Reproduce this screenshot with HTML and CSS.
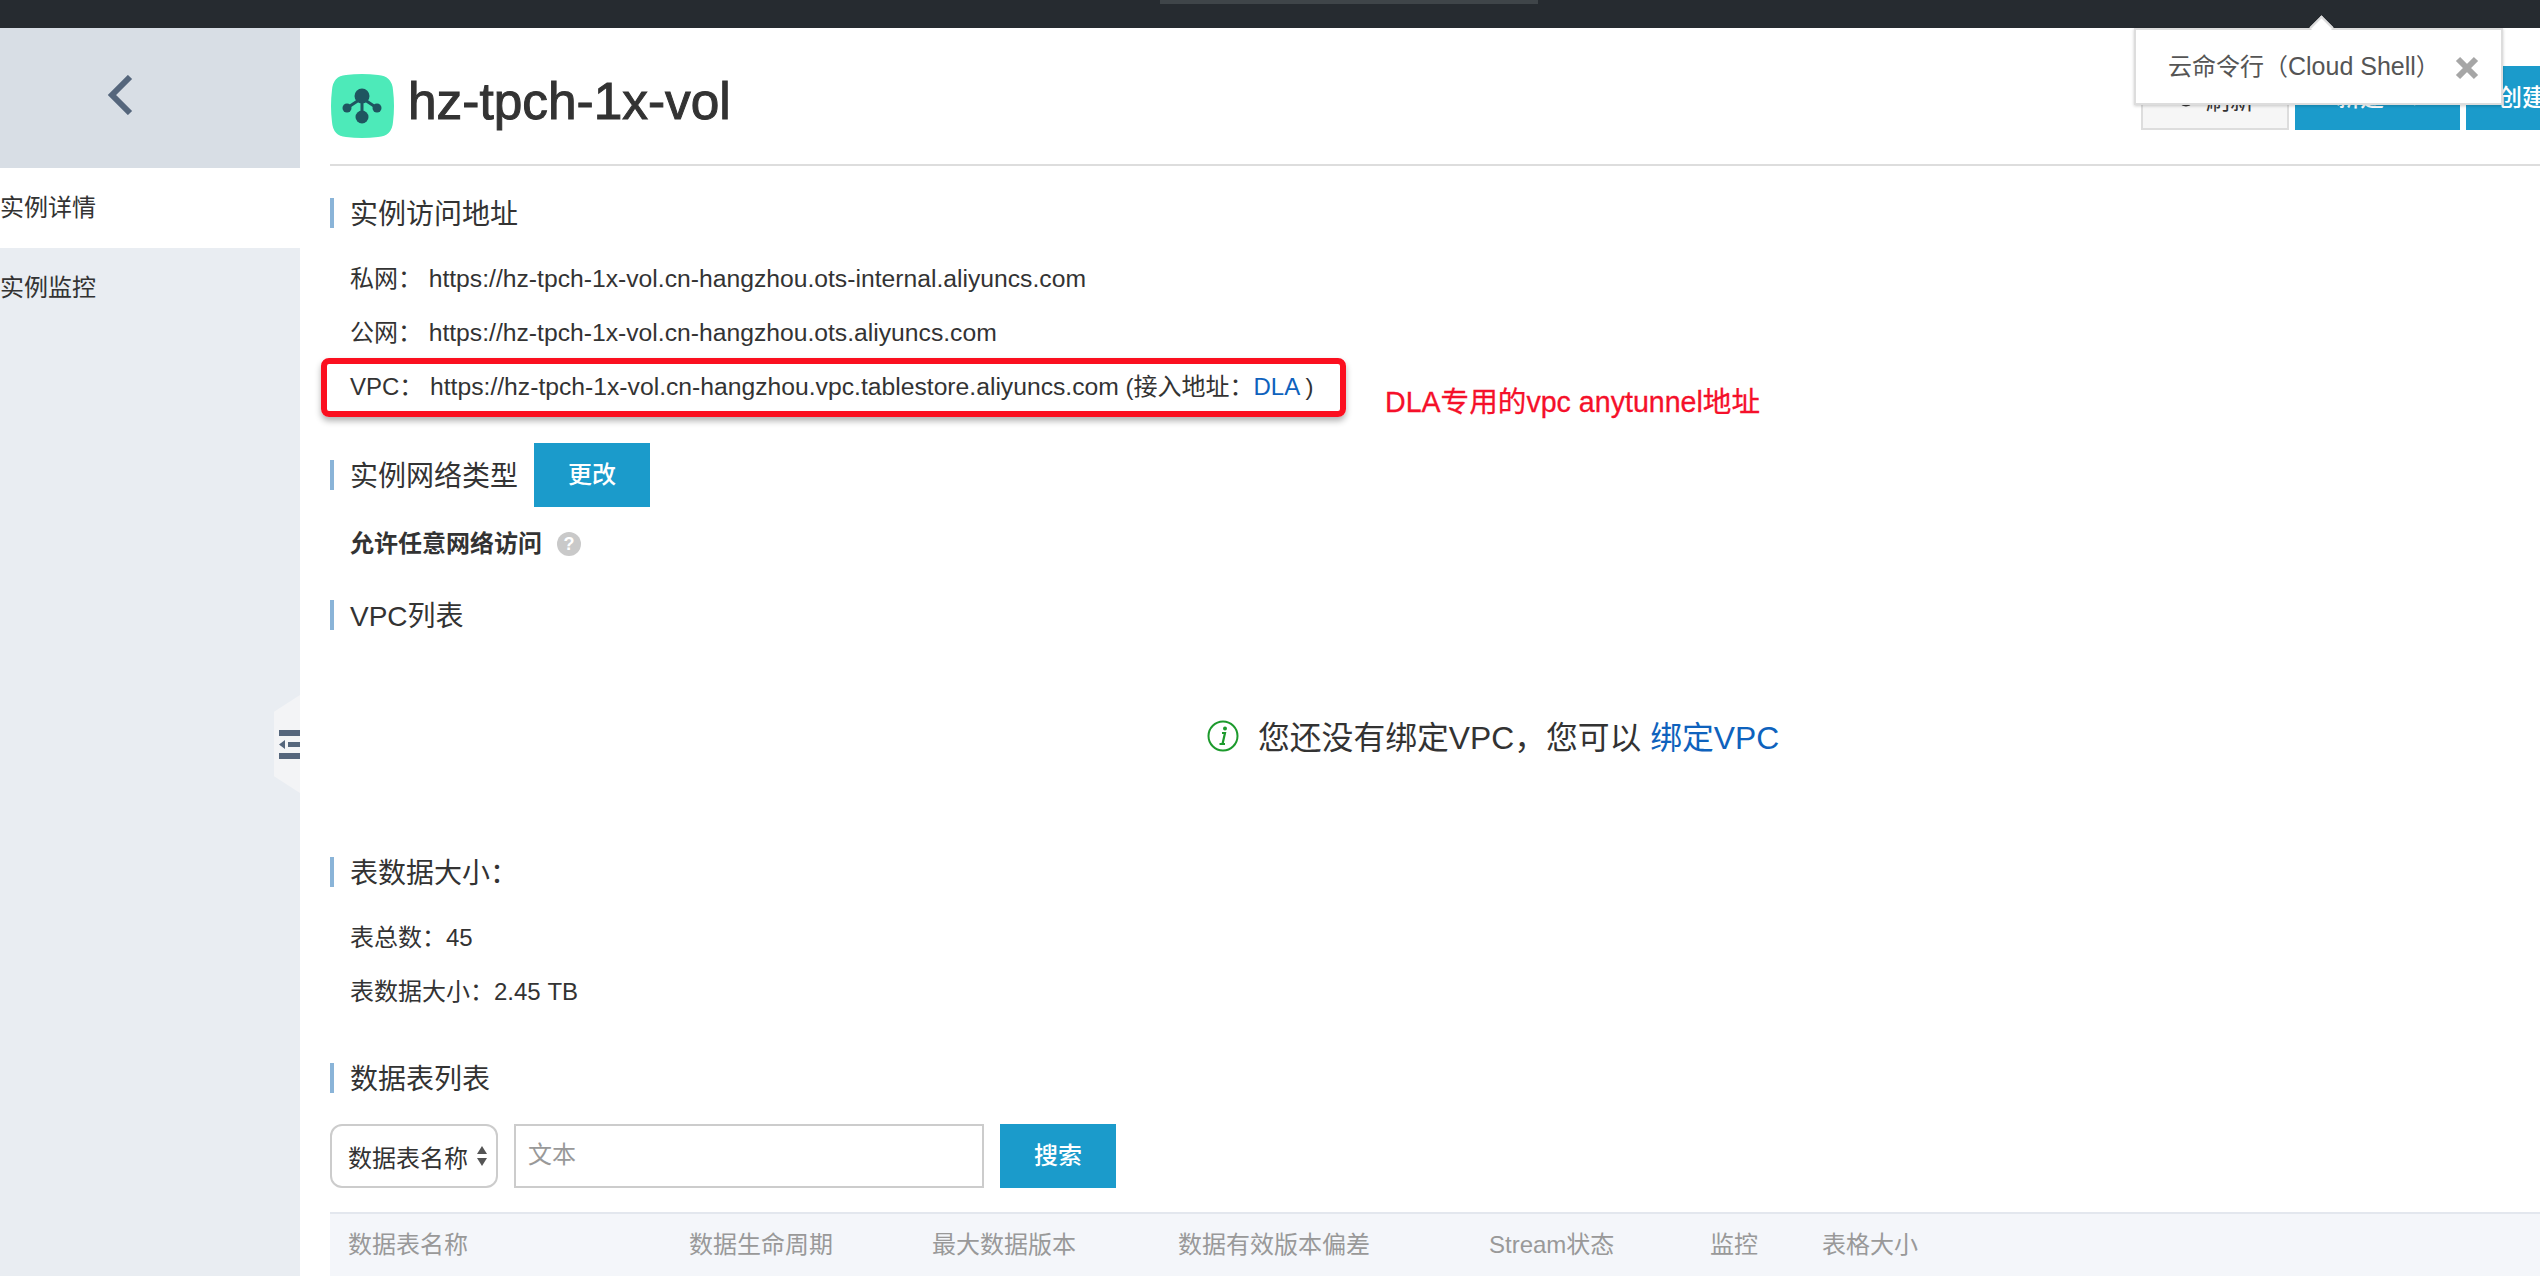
FILE: index.html
```html
<!DOCTYPE html>
<html lang="en">
<head>
<meta charset="UTF-8" />
<title>hz-tpch-1x-vol</title>
<link rel="stylesheet" href="styles.css">
</head>
<body>

<div class="topbar"><div class="top-tab"></div></div>

<div class="page">
  <aside class="sidebar">
    <div class="back">
      <svg width="26" height="40" viewBox="0 0 26 40"><path d="M23 2 L5 20 L23 38" fill="none" stroke="#55667c" stroke-width="6"/></svg>
    </div>
    <div class="side-item active">实例详情</div>
    <div class="side-item">实例监控</div>
  </aside>

  <main class="content">
    <header class="head">
      <div class="logo">
        <svg width="64" height="64" viewBox="0 0 64 64">
          <path d="M16 1 Q32 -1 48 1 Q62 2 63 16 Q65 32 63 48 Q62 62 48 63 Q32 65 16 63 Q3 62 2 48 Q0 32 2 16 Q3 2 16 1 Z" fill="#4deab9"/>
          <path d="M32 22 V43 M17 34 L32 24 L47 34" stroke="#1f5560" stroke-width="3" fill="none"/>
          <circle cx="32" cy="22" r="7.500" fill="#1f5560"/>
          <circle cx="32" cy="43" r="6.500" fill="#1f5560"/>
          <circle cx="17" cy="34" r="4.500" fill="#1f5560"/>
          <circle cx="47" cy="34" r="4.500" fill="#1f5560"/>
        </svg>
      </div>
      <h1>hz-tpch-1x-vol</h1>
      <div class="head-btns">
        <div class="btn-light">
          <svg width="20" height="20" viewBox="0 0 20 20"><circle cx="10" cy="10" r="7" fill="none" stroke="#333" stroke-width="3"/></svg>
          刷新
        </div>
        <div class="btn btn-wide">新建<span class="caret">▾</span></div>
        <div class="btn btn-cut">创建</div>
      </div>
    </header>

    <h2 class="section first">实例访问地址</h2>
    <div class="row">私网：&nbsp;<span class="url">https://hz-tpch-1x-vol.cn-hangzhou.ots-internal.aliyuncs.com</span></div>
    <div class="row">公网：&nbsp;<span class="url">https://hz-tpch-1x-vol.cn-hangzhou.ots.aliyuncs.com</span></div>
    <div class="row">VPC：&nbsp;<span class="url">https://hz-tpch-1x-vol.cn-hangzhou.vpc.tablestore.aliyuncs.com</span> (接入地址：<a>DLA</a> )</div>

    <div class="net-type">
      <h2 class="section">实例网络类型</h2>
      <div class="btn">更改</div>
    </div>
    <div class="allow"><b>允许任意网络访问</b><span class="help">?</span></div>

    <h2 class="section vpc-title">VPC列表</h2>
    <div class="empty">
      <svg width="32" height="32" viewBox="0 0 32 32">
        <circle cx="16" cy="16" r="14.500" fill="none" stroke="#1c9a2c" stroke-width="2"/>
        <path d="M15 13 H18 L15.500 24 H18 M12.500 24 H16" stroke="#1c9a2c" stroke-width="2.200" fill="none"/>
        <circle cx="18" cy="8.500" r="2" fill="#1c9a2c"/>
      </svg>
      <span>您还没有绑定VPC，您可以 <a>绑定VPC</a></span>
    </div>

    <h2 class="section size-title">表数据大小：</h2>
    <div class="row">表总数：45</div>
    <div class="row">表数据大小：2.45 TB</div>

    <h2 class="section list-title">数据表列表</h2>
    <div class="search">
      <div class="select">数据表名称
        <svg width="12" height="22" viewBox="0 0 12 22"><path d="M6 1 L11 9 H1 Z M6 21 L11 13 H1 Z" fill="#555"/></svg>
      </div>
      <div class="input">文本</div>
      <div class="btn">搜索</div>
    </div>

    <div class="thead">
      <span class="c1">数据表名称</span>
      <span class="c2">数据生命周期</span>
      <span class="c3">最大数据版本</span>
      <span class="c4">数据有效版本偏差</span>
      <span class="c5">Stream状态</span>
      <span class="c6">监控</span>
      <span>表格大小</span>
    </div>
  </main>
</div>

<!-- over the page -->
<div class="toggle">
  <svg width="21" height="29" viewBox="0 0 21 29">
    <path d="M0 0 H21 V6 H0 Z M0 23 H21 V29 H0 Z M9 12 H21 V17 H9 Z M6 10 V19 L0 14.500 Z" fill="#55667c"/>
  </svg>
</div>

<div class="popover">
  <span>云命令行（<span class="pop-en">Cloud Shell</span>）</span>
  <svg class="pop-x" width="24" height="24" viewBox="0 0 24 24"><path d="M3 3 L21 21 M21 3 L3 21" stroke="#a6a6a6" stroke-width="6"/></svg>
</div>

<div class="mark"></div>
<div class="mark-text">DLA专用的vpc anytunnel地址</div>

</body>
</html>
```

FILE: styles.css
```css
body {
  margin: 0;
  height: 1276px;
  overflow: hidden;
  background: #fff;
  color: #333;
  font-family: "Liberation Sans", "Noto Sans CJK SC", sans-serif;
  font-size: 24px;
}
a {
  color: #0e62bd;
}
.topbar {
  height: 28px;
  background: #262b30;
}
.top-tab {
  width: 378px;
  height: 4px;
  margin-left: 1160px;
  background: #3f4549;
}
.page {
  display: flex;
  height: 1248px;
}
.sidebar {
  width: 300px;
  flex: none;
  background: #e9edf2;
}
.back {
  height: 140px;
  background: #d8dee5;
  padding: 47px 0 0 107px;
  box-sizing: border-box;
}
.back svg {
  display: block;
}
.side-item {
  height: 80px;
  line-height: 79px;
}
.side-item.active {
  background: #fff;
}
.content {
  flex: 1;
  min-width: 0;
  padding: 0 0 0 30px;
}
.head {
  height: 136px;
  border-bottom: 2px solid #ddd;
  display: flex;
  align-items: flex-start;
}
.logo {
  margin-top: 46px;
  height: 64px;
}
.logo svg {
  display: block;
}
h1 {
  margin: 43px 0 0 14px;
  font-size: 51.4px;
  line-height: 60px;
  font-weight: 500;
  -webkit-text-stroke: 1px #333;
}
.head-btns {
  margin-left: auto;
  margin-top: 38px;
  display: flex;
  gap: 6px;
}
.btn {
  width: 116px;
  height: 64px;
  line-height: 64px;
  background: #1b9bcb;
  color: #fff;
  text-align: center;
  font-weight: 500;
  white-space: nowrap;
}
.btn-light {
  width: 148px;
  height: 64px;
  box-sizing: border-box;
  border: 2px solid #ddd;
  background: #f6f6f6;
  display: flex;
  align-items: center;
  justify-content: center;
  gap: 10px;
}
.btn-wide {
  width: 165px;
}
.caret {
  margin-left: 26px;
  font-size: 18px;
}
.btn-cut {
  width: 74px;
  text-align: left;
  padding-left: 32px;
  box-sizing: border-box;
}
.section {
  margin: 0;
  height: 30px;
  font-size: 28px;
  font-weight: 400;
  line-height: 34px;
  padding-left: 16px;
  border-left: 4px solid #8ab4d8;
}
.section.first {
  margin: 32px 0 24px;
}
.row {
  height: 54px;
  line-height: 54px;
  padding-left: 20px;
  white-space: nowrap;
}
.url {
  font-size: 24.7px;
}
.net-type {
  display: flex;
  align-items: center;
  gap: 16px;
  margin-top: 29px;
}
.allow {
  margin-top: 17px;
  padding-left: 20px;
  line-height: 40px;
  display: flex;
  align-items: center;
}
.help {
  width: 24px;
  height: 24px;
  margin-left: 15px;
  border-radius: 50%;
  background: #c9c9c9;
  color: #fff;
  font-size: 18px;
  line-height: 24px;
  text-align: center;
  font-weight: 700;
}
.vpc-title {
  margin-top: 36px;
}
.empty {
  height: 185px;
  padding-top: 25px;
  box-sizing: border-box;
  display: flex;
  align-items: center;
  gap: 19px;
  margin-left: 877px;
  font-size: 31.8px;
  white-space: nowrap;
}
.empty svg {
  margin-top: 2px;
}
.size-title {
  margin-top: 42px;
}
.size-title + .row {
  margin-top: 24px;
}
.list-title {
  margin-top: 44px;
}
.search {
  display: flex;
  gap: 16px;
  margin-top: 31px;
}
.select {
  width: 168px;
  height: 64px;
  box-sizing: border-box;
  border: 2px solid #ccc;
  border-radius: 12px;
  padding-left: 16px;
  display: flex;
  align-items: center;
  gap: 8px;
  white-space: nowrap;
}
.input {
  width: 470px;
  height: 64px;
  box-sizing: border-box;
  border: 2px solid #ccc;
  padding-left: 12px;
  line-height: 58px;
  color: #999;
}
.thead {
  margin-top: 24px;
  height: 70px;
  box-sizing: border-box;
  border-top: 2px solid #e3e7ee;
  background: #f4f6fa;
  padding-left: 18px;
  line-height: 62px;
  color: #999;
  display: flex;
  white-space: nowrap;
}
.thead span {
  flex: none;
}
.c1 { width: 341px; }
.c2 { width: 243px; }
.c3 { width: 246px; }
.c4 { width: 311px; }
.c5 { width: 221px; }
.c6 { width: 112px; }

.toggle {
  position: absolute;
  left: 274px;
  top: 695px;
  width: 26px;
  height: 98px;
  background: #f3f4f6;
  clip-path: polygon(100% 0, 100% 100%, 0 83%, 0 17%);
  display: flex;
  align-items: center;
  justify-content: flex-end;
}
.popover {
  position: absolute;
  z-index: 2;
  left: 2134px;
  top: 28px;
  width: 369px;
  height: 77px;
  box-sizing: border-box;
  border: 2px solid #ddd;
  background: #fff;
  box-shadow: 0 1px 3px rgb(0 0 0 / 0.2);
  color: #555;
  line-height: 72px;
  padding-left: 32px;
  white-space: nowrap;
}
.pop-en {
  font-size: 25px;
}
.popover::before {
  content: "";
  position: absolute;
  left: 177px;
  top: -11px;
  width: 17px;
  height: 17px;
  box-sizing: border-box;
  background: #fff;
  border-top: 2px solid #ddd;
  border-left: 2px solid #ddd;
  transform: rotate(45deg);
}
.pop-x {
  position: absolute;
  right: 22px;
  top: 26px;
}
.mark {
  position: absolute;
  left: 321px;
  top: 358px;
  width: 1025px;
  height: 59px;
  box-sizing: border-box;
  border: 6px solid #fb0f1f;
  border-radius: 8px;
  box-shadow: 0 4px 6px rgb(0 0 0 / 0.3);
}
.mark-text {
  position: absolute;
  left: 1385px;
  top: 384px;
  color: #f5102a;
  font-size: 28.6px;
  line-height: 36px;
  white-space: nowrap;
  -webkit-text-stroke: 0.3px #f5102a;
}
```
